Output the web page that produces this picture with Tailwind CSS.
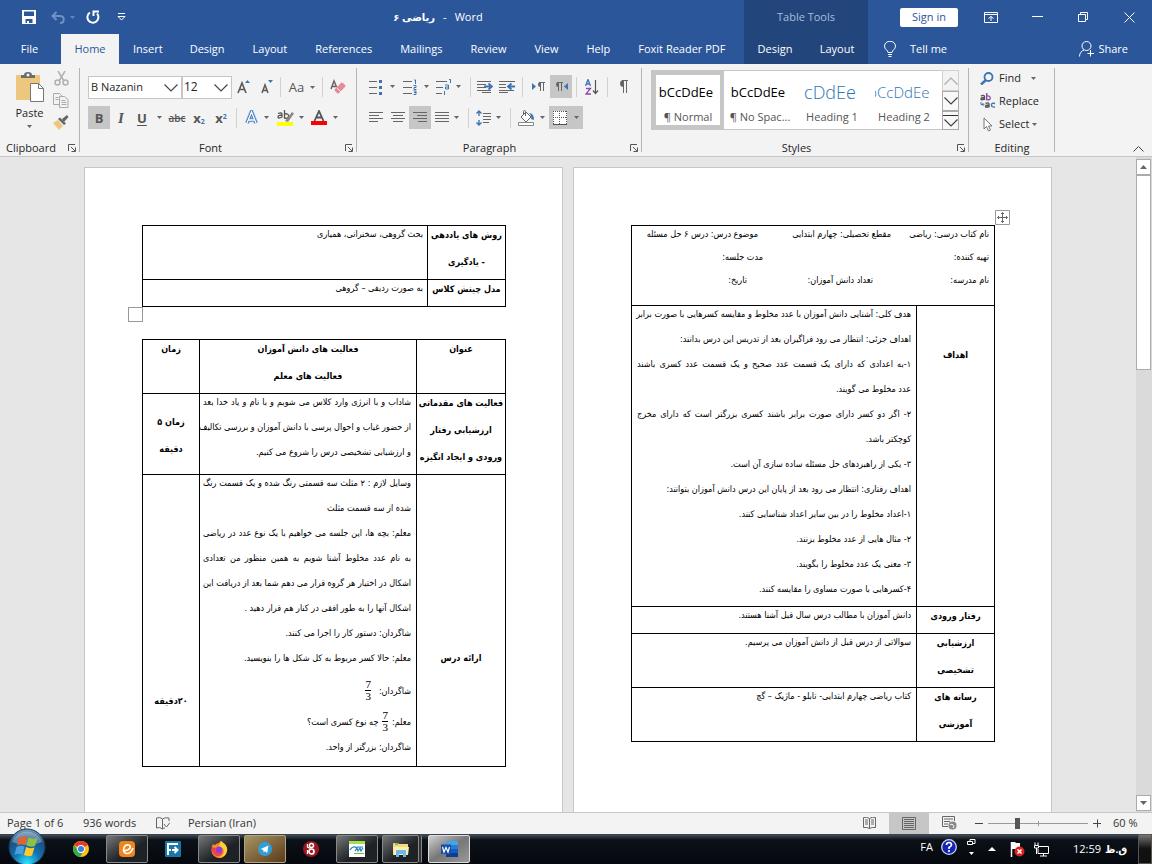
<!DOCTYPE html>
<html lang="en">
<head>
<meta charset="utf-8">
<title>ریاضی ۶ - Word</title>
<script src="https://cdn.jsdelivr.net/npm/@tailwindcss/browser@4"></script>
</head>
<body class="flex h-screen flex-col overflow-hidden bg-[#e6e6e6] font-['Open_Sans','DejaVu_Sans',sans-serif] text-[11px] leading-4 text-[#262626]">

<svg class="hidden">
  <symbol id="caret" viewBox="0 0 5 3"><path d="M0 0h5L2.5 3z" fill="#666"/></symbol>
  <symbol id="chev" viewBox="0 0 14 8"><path d="M.5.5 7 7 13.5.5" fill="none" stroke="#444" stroke-width="1.2"/></symbol>
  <symbol id="launch" viewBox="0 0 8 8"><path d="M.5 7V.5H7M3 3l4 4M7.500 3.500v4h-4" fill="none" stroke="#555"/></symbol>
</svg>

<header class="flex h-16 shrink-0 bg-[#2b579a] text-white">
  <div class="flex min-w-0 flex-1 flex-col">
    <div class="flex h-[34px] items-center">
      <div class="flex w-[132px] items-center pl-[22px]">
        <button aria-label="Save"><svg width="14" height="14" viewBox="0 0 14 14"><path fill="#fff" fill-rule="evenodd" d="M0 0h14v14H0zM2 1.500v4.500h10V1.500zM3.500 9v4H5v-2h2v2h3.500V9z"/></svg></button>
        <button aria-label="Undo" class="ml-[15px]"><svg width="15" height="13" viewBox="0 0 15 13" fill="none" stroke="#6f91c4" stroke-width="2"><path d="M5.500 1 1.500 5l4 4M2 5h7c5 0 5 7 0 7"/></svg></button>
        <svg class="ml-1 h-[3px] w-[5px] opacity-60"><path d="M0 0h5L2.500 3z" fill="#8aa6d2"/></svg>
        <button aria-label="Redo" class="ml-[11px]"><svg width="14" height="14" viewBox="0 0 14 14" fill="none" stroke="#fff" stroke-width="2"><path d="M4 2.500A5.500 5.500 0 1 0 11 3.500"/><path d="M7.500 6V1.500H13"/></svg></button>
        <button aria-label="Customize toolbar" class="ml-[17px]"><svg width="9" height="8" viewBox="0 0 9 8" fill="none" stroke="#fff"><path d="M1 .5h7M1 3.500h7L4.500 7z"/></svg></button>
      </div>
      <h1 class="flex flex-1 justify-center gap-2 whitespace-pre text-[11px]"><bdi lang="fa" class="text-[10px] font-bold">ریاضی ۶</bdi><span>-</span><span>Word</span></h1>
    </div>
    <nav class="flex h-[30px] gap-[2px] whitespace-nowrap">
      <button class="w-[59px]">File</button>
      <button class="w-[58px] bg-[#f3f3f3] text-[#2b579a]">Home</button>
      <button class="px-3">Insert</button>
      <button class="px-[13px]">Design</button>
      <button class="px-[13px]">Layout</button>
      <button class="px-[13px]">References</button>
      <button class="px-[13px]">Mailings</button>
      <button class="px-[13px]">Review</button>
      <button class="px-[13px]">View</button>
      <button class="px-[13px]">Help</button>
      <button class="px-[13px]">Foxit Reader PDF</button>
    </nav>
  </div>
  <div class="flex w-[124px] flex-col bg-[#22457b]">
    <div class="flex h-[34px] items-center justify-center text-[#a9bddc]">Table Tools</div>
    <nav class="flex h-[30px]">
      <button class="flex-1">Design</button>
      <button class="flex-1">Layout</button>
    </nav>
  </div>
  <div class="flex w-[284px] flex-col">
    <div class="flex h-[34px] items-center justify-end">
      <button class="mr-[10px] h-[19px] w-[58px] rounded-xs bg-white text-[#2b579a]">Sign in</button>
      <button aria-label="Ribbon display options" class="flex w-[46px] justify-center"><svg width="14" height="11" viewBox="0 0 14 11" fill="none" stroke="#fff"><path d="M.5.5h13v10H.5zM.5 2.500h13M7 9V4.500M4.500 6.500 7 4.500l2.500 2"/></svg></button>
      <button aria-label="Minimize" class="flex w-[46px] justify-center"><svg width="11" height="2"><path d="M0 .5h11" stroke="#fff"/></svg></button>
      <button aria-label="Restore" class="flex w-[46px] justify-center"><svg width="10" height="10" viewBox="0 0 10 10" fill="none" stroke="#fff"><path d="M.5 2.500h7v7h-7zM2.500 2V.5h7v7H8"/></svg></button>
      <button aria-label="Close" class="flex w-[46px] justify-center"><svg width="11" height="11" viewBox="0 0 11 11"><path d="m.5.5 10 10M10.500.5l-10 10" stroke="#fff"/></svg></button>
    </div>
    <div class="flex h-[30px] items-center pr-6 pl-4">
      <button class="flex items-center gap-[14px]"><svg width="12" height="16" viewBox="0 0 12 16" fill="none" stroke="#fff"><path d="M4 11.500c0-2.500-3.500-3-3.500-6.300a5.500 5 0 0 1 11 0C11.500 8.500 8 9 8 11.500zM4 13.500h4M4.500 15.500h3"/></svg>Tell me</button>
      <button class="ml-auto flex items-center gap-1"><svg width="15" height="16" viewBox="0 0 15 16" fill="none" stroke="#fff"><circle cx="7.500" cy="5" r="4.500"/><path d="M.5 15.500c0-3.500 2-5.500 4.500-6.500M11.500 9v6.500M8.500 12.500H15"/></svg>Share</button>
    </div>
  </div>
</header>

<section aria-label="Ribbon" class="flex h-[93px] shrink-0 border-b border-[#c6c6c6] bg-[#f3f3f3] pt-1">
  <!-- Clipboard -->
  <div class="flex w-20 flex-col">
    <div class="flex h-[70px] pt-[3px] pl-4">
      <button class="flex w-[27px] flex-col items-center">
        <svg class="shrink-0" width="29" height="31" viewBox="0 0 29 31"><path d="M1 4h24v25H1z" fill="#edc77d"/><path d="M6 7V4h3q0-3 4-3t4 3h3v3z" fill="#6d6d6d"/><circle cx="13" cy="4" r="1.500" fill="#f3f3f3"/><path d="M15.500 12.500h8l5 5v13h-13z" fill="#fff" stroke="#777"/><path d="M23.500 12.500v5h5" fill="none" stroke="#777"/></svg>
        <span class="mt-[3px]">Paste</span>
        <svg class="mt-1 h-[3px] w-[5px] shrink-0"><use href="#caret"/></svg>
      </button>
      <div class="ml-[10px] flex flex-col items-center gap-[7px]">
        <button aria-label="Cut"><svg width="15" height="15" viewBox="0 0 15 15" fill="none" stroke="#b0b0b0" stroke-width="1.500"><path d="m4 0 6 10M11 0 5 10"/><circle cx="3.500" cy="11.500" r="2.500"/><circle cx="11.500" cy="11.500" r="2.500"/></svg></button>
        <button aria-label="Copy"><svg width="16" height="15" viewBox="0 0 16 15" fill="#f3f3f3" stroke="#aaa"><path d="M.5.5h6l3 3v8h-9z"/><path d="M6.500 3.500h5l3.500 3v8H6.500zM8.500 7.500h4M8.500 9.500h5M8.500 11.500h5M2.500 4.500h3M2.500 6.500h3"/></svg></button>
        <button aria-label="Format Painter"><svg width="16" height="15" viewBox="0 0 16 15"><path d="m0 8 5-3 5 6-4 4z" fill="#edc77d"/><path d="m5 4 2-1.500 6 6L11 10z" fill="#666"/><path d="m9 4 5-4 1.500 2L11 7z" fill="#666"/></svg></button>
      </div>
    </div>
    <div class="flex justify-center pt-[2px] pr-[2px] pl-1.5"><span class="flex-1">Clipboard</span><button aria-label="Clipboard options" class="px-0.5"><svg class="size-2"><use href="#launch"/></svg></button></div>
  </div>
  <div class="mb-1 -ml-px w-px bg-[#b4b4b4]"></div>

  <!-- Font -->
  <div class="flex w-[277px] flex-col">
    <div class="h-[70px] pt-2 pl-2">
      <div class="flex h-[22px] items-center">
        <label class="relative flex h-[23px] w-[94px] shrink-0"><span class="sr-only">Font name</span><input value="B Nazanin" class="w-full border border-[#c6c6c6] bg-white pr-5 pl-[2px] text-[11px] leading-5 outline-none"><svg class="absolute top-2 right-[4px] h-2 w-[14px]"><use href="#chev"/></svg></label>
        <label class="relative flex h-[23px] w-[50px] shrink-0"><span class="sr-only">Font size</span><select class="w-full appearance-none border border-[#c6c6c6] bg-white pl-px text-[12px] leading-5 outline-none"><option>12</option></select><svg class="absolute top-2 right-[4px] h-2 w-[14px]"><use href="#chev"/></svg></label>
        <button aria-label="Grow font" class="flex w-6 justify-center"><svg width="14" height="16" viewBox="0 0 14 16"><path d="m1 14 4-10 4 10M2.500 10.500h5" fill="none" stroke="#5a5a5a" stroke-width="1.600"/><path d="M8 4h5l-2.500-3z" fill="#3e74b4"/></svg></button>
        <button aria-label="Shrink font" class="flex w-[22px] justify-center"><svg width="13" height="16" viewBox="0 0 13 16"><path d="m1 14 3-8 3 8M2 11.500h4" fill="none" stroke="#5a5a5a" stroke-width="1.500"/><path d="M7 1h5L9.500 4z" fill="#3e74b4"/></svg></button>
        <span class="mx-[2px] h-5 w-px bg-[#d2d2d2]"></span>
        <button aria-label="Change case" class="flex w-[38px] items-center justify-center gap-1.5 text-[13px] text-[#555]">Aa<svg class="h-[3px] w-[5px]"><use href="#caret"/></svg></button>
        <span class="mx-px h-5 w-px bg-[#d2d2d2]"></span>
        <button aria-label="Clear formatting" class="flex w-7 justify-center"><svg width="16" height="16" viewBox="0 0 16 16"><path d="m1 10 3-8 3 7M2 7.500h4" fill="none" stroke="#666" stroke-width="1.500"/><path d="m5 10 6-6q1-1 2 0l2 2q1 1 0 2l-6 6q-1 1-2 0l-2-2q-1-1 0-2" fill="#e8899a"/><path d="m6.500 8.500 5 5" stroke="#f3f3f3"/></svg></button>
      </div>
      <div class="mt-2 flex h-[23px] items-center text-[13px] text-[#555]">
        <button aria-label="Bold" class="h-full w-[22px] bg-[#c6c6c6] font-bold">B</button>
        <button aria-label="Italic" class="w-[22px] font-['Liberation_Serif',serif] text-[15px] font-bold italic">I</button>
        <button aria-label="Underline" class="flex w-[34px] items-center gap-2.5 pl-[5px]"><span class="font-bold underline underline-offset-2">U</span><svg class="h-[3px] w-[5px]"><use href="#caret"/></svg></button>
        <button aria-label="Strikethrough" class="flex w-[22px] justify-center text-[10px] font-semibold line-through">abc</button>
        <button aria-label="Subscript" class="w-[22px] font-bold">x<sub class="text-[7px] text-[#3e74b4]">2</sub></button>
        <button aria-label="Superscript" class="w-[22px] font-bold">x<sup class="text-[7px] text-[#3e74b4]">2</sup></button>
        <span class="mx-1 h-5 w-px bg-[#d2d2d2]"></span>
        <button aria-label="Text effects" class="flex w-8 items-center gap-[5px] pl-[3px]"><svg width="15" height="16" viewBox="0 0 15 16" fill="none"><path d="m3 13 4.500-11L12 13M4.500 10h6" stroke="#a8c8ec" stroke-width="4.500"/><path d="m3 13 4.500-11L12 13M4.500 10h6" stroke="#3e74b4" stroke-width="3"/><path d="m3 13 4.500-11L12 13M4.500 10h6" stroke="#fff" stroke-width="1.300"/></svg><svg class="h-[3px] w-[5px]"><use href="#caret"/></svg></button>
        <button aria-label="Highlight" class="flex w-[34px] items-center gap-[6px] pl-1"><span class="flex w-4 flex-col"><svg width="17" height="12" viewBox="0 0 17 12"><path d="M1 3.500q4-1.500 4 1v3M5 5Q1 5 1 7t4 0M7.500 0v8q4 1 4-2t-4-2" fill="none" stroke="#555" stroke-width="1.300"/><path d="m8 11 7-9 2 1.500L11 12z" fill="#888"/></svg><span class="h-1 bg-[#ff0]"></span></span><svg class="h-[3px] w-[5px]"><use href="#caret"/></svg></button>
        <button aria-label="Font color" class="flex w-9 items-center gap-[6px] pl-1"><span class="flex w-4 flex-col items-center"><svg width="12" height="11" viewBox="0 0 12 11"><path d="m1.500 11 4.500-10 4.500 10M3 7.500h6" fill="none" stroke="#555" stroke-width="1.800"/></svg><span class="h-1 w-4 bg-[red]"></span></span><svg class="h-[3px] w-[5px]"><use href="#caret"/></svg></button>
      </div>
    </div>
    <div class="flex pt-[2px] pr-1"><span class="flex-1 pr-1 text-center">Font</span><button aria-label="Font options"><svg class="size-2"><use href="#launch"/></svg></button></div>
  </div>
  <div class="mb-1 -ml-px w-px bg-[#b4b4b4]"></div>

  <!-- Paragraph -->
  <div class="flex w-[285px] flex-col">
    <div class="h-[70px] pt-[7px] pl-2">
      <div class="flex h-[23px] items-center">
        <button aria-label="Bullets" class="flex w-[34px] items-center gap-[7px] pl-1"><svg width="14" height="16" viewBox="0 0 14 16"><path d="M0 2.500h8M0 8.500h8M0 14.500h8" stroke="#666"/><path d="M10 1h3v3h-3zM10 7h3v3h-3zM10 13h3v3h-3z" fill="#3e74b4"/></svg><svg class="h-[3px] w-[5px]"><use href="#caret"/></svg></button>
        <button aria-label="Numbering" class="flex w-[34px] items-center gap-[7px] pl-1"><svg width="14" height="16" viewBox="0 0 14 16"><path d="M0 2.500h9M0 8.500h9M0 14.500h9" stroke="#666"/><path d="M11 1h1.500v4M10.500 6.500h2.500v2h-2v2h2.500M10.500 12h2.500v3.500h-2.500M11 13.500h2" fill="none" stroke="#3e74b4"/></svg><svg class="h-[3px] w-[5px]"><use href="#caret"/></svg></button>
        <button aria-label="Multilevel list" class="flex w-[34px] items-center gap-1 pl-[3px]"><svg width="16" height="16" viewBox="0 0 16 16"><path d="M0 2.500h11M0 8.500h7M0 14.500h6" stroke="#666"/><path d="M13 .5h1.500V4M9 6h3.500v4H9.500V8h3M8.500 12v4" fill="none" stroke="#3e74b4"/></svg><svg class="h-[3px] w-[5px]"><use href="#caret"/></svg></button>
        <span class="mx-[3px] h-5 w-px bg-[#d2d2d2]"></span>
        <button aria-label="Decrease indent" class="flex w-[22px] justify-center"><svg width="16" height="12" viewBox="0 0 16 12"><path d="M0 .5h14M0 3.500h9M0 6.500h9M0 9.500h14M5 11.500h9" stroke="#666"/><path d="M7 5.500h7M11.500 2.500l3.500 3-3.500 3" fill="none" stroke="#3e74b4" stroke-width="1.800"/></svg></button>
        <button aria-label="Increase indent" class="flex w-[22px] justify-center"><svg width="16" height="12" viewBox="0 0 16 12"><path d="M0 .5h16M0 3.500h7M0 6.500h7M0 9.500h15M0 11.500h9" stroke="#666"/><path d="M9 5.500h7M12.500 2.500l-3.500 3 3.500 3" fill="none" stroke="#3e74b4" stroke-width="1.800"/></svg></button>
        <span class="mx-1 h-5 w-px bg-[#d2d2d2]"></span>
        <button aria-label="Left to right" class="flex w-[23px] items-center justify-center"><svg width="13" height="9" viewBox="0 0 13 9"><path d="M0 1v7l4-3.500z" fill="#3e74b4"/><path d="M8.500 0v9M11.500 0v9M7 .5h6" stroke="#666"/><path d="M8.500 0v5a2.500 2.500 0 0 1 0-5" fill="#666"/></svg></button>
        <button aria-label="Right to left" class="flex h-full w-[22px] items-center justify-center bg-[#c6c6c6]"><svg width="13" height="9" viewBox="0 0 13 9"><path d="M13 1v7L9 4.500z" fill="#3e74b4"/><path d="M3.500 0v9M6.500 0v9M2 .5h6" stroke="#666"/><path d="M3.500 0v5a2.500 2.500 0 0 1 0-5" fill="#666"/></svg></button>
        <span class="mx-1 h-5 w-px bg-[#d2d2d2]"></span>
        <button aria-label="Sort" class="flex w-[22px] justify-center"><svg width="14" height="16" viewBox="0 0 14 16" fill="none"><path d="m.5 7 2.500-6.500L5.500 7M1.500 5h3" stroke="#3e74b4" stroke-width="1.300"/><path d="M1 9.500h4.500L1 15h5" stroke="#8c4bab" stroke-width="1.300"/><path d="M10.500 1v13M8 11.500l2.500 3 2.500-3" stroke="#555" stroke-width="1.200"/></svg></button>
        <span class="mx-1 h-5 w-px bg-[#d2d2d2]"></span>
        <button aria-label="Show marks" class="flex w-[22px] justify-center"><svg width="10" height="13" viewBox="0 0 10 13"><path d="M5.500 0v13M8.500 0v13M4 .5h6" stroke="#666"/><path d="M5.500 0v7a3.500 3.500 0 0 1 0-7" fill="#666"/></svg></button>
      </div>
      <div class="mt-2 flex h-[23px] items-center">
        <button aria-label="Align left" class="flex w-[22px] justify-center"><svg width="14" height="11" viewBox="0 0 14 11"><path d="M0 .5h14M0 3.500h10M0 6.500h14M0 9.500h9" stroke="#666"/></svg></button>
        <button aria-label="Center" class="flex w-[22px] justify-center"><svg width="14" height="11" viewBox="0 0 14 11"><path d="M0 .5h14M2 3.500h10M0 6.500h14M2 9.500h10" stroke="#666"/></svg></button>
        <button aria-label="Align right" class="flex h-full w-[22px] items-center justify-center bg-[#c6c6c6]"><svg width="14" height="11" viewBox="0 0 14 11"><path d="M0 .5h14M4 3.500h10M0 6.500h14M5 9.500h9" stroke="#666"/></svg></button>
        <button aria-label="Justify" class="flex w-[34px] items-center gap-[5px] pl-1"><svg width="14" height="11" viewBox="0 0 14 11"><path d="M0 .5h14M0 3.500h14M0 6.500h14M0 9.500h14" stroke="#666"/></svg><svg class="h-[3px] w-[5px]"><use href="#caret"/></svg></button>
        <span class="mx-[3px] h-5 w-px bg-[#d2d2d2]"></span>
        <button aria-label="Line spacing" class="flex w-[34px] items-center gap-[5px] pl-1"><svg width="15" height="16" viewBox="0 0 15 16"><path d="M7 3.500h8M7 6.500h8M7 9.500h8M7 12.500h6" stroke="#666"/><path d="M3 1v5M3 10v5M.5 3.500 3 1l2.500 2.500M.5 12.500 3 15l2.500-2.500" fill="none" stroke="#3e74b4" stroke-width="1.400"/></svg><svg class="h-[3px] w-[5px]"><use href="#caret"/></svg></button>
        <span class="mx-1 h-5 w-px bg-[#d2d2d2]"></span>
        <button aria-label="Shading" class="flex w-[34px] items-center gap-[5px] pl-[3px]"><svg width="17" height="16" viewBox="0 0 17 16"><path d="m3 7 5-5 5 5-5 5z" fill="#fff" stroke="#666"/><path d="M7.500 6V1.500q0-1-1-1t-1 1V4" fill="none" stroke="#666"/><path d="M11 3q5 0 5 7l-3-1q1-3-2-6" fill="#3e74b4"/><path d="M.5 12.500h15v3H.5z" fill="#fff" stroke="#888"/></svg><svg class="h-[3px] w-[5px]"><use href="#caret"/></svg></button>
        <button aria-label="Borders" class="flex h-full w-[34px] items-center gap-[7px] bg-[#c6c6c6] pl-1"><svg width="14" height="14" viewBox="0 0 14 14"><path d="M0 0h14v14H0z" fill="#fff"/><path d="M0 .5h14M0 6.500h14M.5 0v14M6.500 0v14M13.500 0v14" stroke="#555" stroke-dasharray="1 1"/><path d="M0 13.500h14" stroke="#555"/></svg><svg class="h-[3px] w-[5px]"><use href="#caret"/></svg></button>
      </div>
    </div>
    <div class="flex pt-[2px] pr-1"><span class="flex-1 pr-2 text-center">Paragraph</span><button aria-label="Paragraph options"><svg class="size-2"><use href="#launch"/></svg></button></div>
  </div>
  <div class="mb-1 -ml-px w-px bg-[#b4b4b4]"></div>

  <!-- Styles -->
  <div class="flex w-[327px] flex-col">
    <div class="h-[70px] pt-0.5 pl-[9px]">
      <div class="flex h-[60px] w-[308px] border border-[#c6c6c6] bg-white text-[#555]">
        <button class="flex w-[72px] flex-col items-center overflow-hidden border-4 border-[#c6c6c6] pt-2 whitespace-nowrap"><span class="h-[26px] pr-1 text-[13px] leading-[18px] text-black">bCcDdEe</span>¶ Normal</button>
        <button class="flex w-[72px] flex-col items-center overflow-hidden pt-3 whitespace-nowrap"><span class="h-[26px] pr-1 text-[13px] leading-[18px] text-black">bCcDdEe</span>¶ No Spac...</button>
        <button class="flex w-[72px] flex-col items-center overflow-hidden pt-3 whitespace-nowrap"><span class="h-[26px] pr-1 text-[18px] leading-[18px] font-light text-[#2e74b5]">cDdEe</span>Heading 1</button>
        <button class="flex w-[72px] flex-col items-center overflow-hidden pt-3 whitespace-nowrap"><span class="mr-1 flex h-[26px] w-[55px] justify-end overflow-hidden text-[15px] leading-[18px] font-light text-[#2e74b5]">bCcDdEe</span>Heading 2</button>
        <div class="-my-px -mr-px ml-auto flex w-[17px] flex-col">
          <button aria-label="Scroll styles up" class="flex h-[21px] items-center justify-center border border-[#d0d0d0] bg-[#f3f3f3]"><svg class="h-2 w-[14px] rotate-180 opacity-40"><use href="#chev"/></svg></button>
          <button aria-label="Scroll styles down" class="flex h-5 items-center justify-center border border-[#ababab] bg-[#f8f8f8]"><svg class="h-2 w-[14px]"><use href="#chev"/></svg></button>
          <button aria-label="More styles" class="flex flex-1 flex-col items-center justify-center gap-[3px] border border-[#ababab] bg-[#f8f8f8]"><span class="h-px w-full bg-[#333]"></span><svg class="h-2 w-[14px]"><use href="#chev"/></svg></button>
        </div>
      </div>
    </div>
    <div class="flex pt-[2px] pr-1"><span class="flex-1 pr-1.5 text-center">Styles</span><button aria-label="Style options"><svg class="size-2"><use href="#launch"/></svg></button></div>
  </div>
  <div class="mb-1 -ml-px w-px bg-[#b4b4b4]"></div>

  <!-- Editing -->
  <div class="flex w-[86px] flex-col">
    <div class="flex h-[70px] flex-col gap-[7px] pt-[2px] pl-[11px]">
      <button class="flex items-center"><svg class="mr-[5px]" width="14" height="13" viewBox="0 0 14 13"><circle cx="8.500" cy="5" r="4" fill="none" stroke="#3e74b4" stroke-width="1.800"/><path d="m6 8-5 4.500" stroke="#3e74b4" stroke-width="2.500"/></svg>Find<svg class="ml-[10px] h-[3px] w-[5px]"><use href="#caret"/></svg></button>
      <button class="flex items-center gap-[3px]"><svg width="16" height="16" viewBox="0 0 16 16" fill="none" stroke-width="1.400"><path d="M1 3q3-1.500 3.500.5V7M4.500 4.500q-3.500 0-3.500 1.500t3.500 0" stroke="#555"/><path d="M6.700 0v6.500q3.500 1 3.500-1.500t-3.500-2" stroke="#8c4bab"/><path d="M5.500 10.500q3-1.500 3.500.5v3.500M9 12q-3.500 0-3.500 1.500t3.500 0" stroke="#555"/><path d="M15 10.500q-3.500-1-3.500 1.500t3.500 2" stroke="#3e74b4"/><path d="M1 9v2.500h2.500M2.500 10l1.500 1.500L2.500 13" stroke="#3e74b4" stroke-width="1"/></svg>Replace</button>
      <button class="flex items-center pl-[3px]"><svg class="mr-1.5" width="10" height="15" viewBox="0 0 10 15"><path d="M1 1v11l2.500-2.500L5.500 14l2-1-2-4H9z" fill="#fff" stroke="#777"/></svg>Select<svg class="ml-[3px] h-[3px] w-[5px]"><use href="#caret"/></svg></button>
    </div>
    <div class="pt-[2px] text-center">Editing</div>
  </div>
  <div class="mb-1 -ml-px w-px bg-[#b4b4b4]"></div>
  <button aria-label="Collapse ribbon" class="mt-auto mr-2 mb-1 ml-auto"><svg width="11" height="6" viewBox="0 0 11 6"><path d="m.5 5.500 5-5 5 5" fill="none" stroke="#444"/></svg></button>
</section>

<main class="flex min-h-0 flex-1">
  <div dir="rtl" lang="fa" class="flex min-w-0 flex-1 justify-center gap-[10px] overflow-hidden pt-[10px] font-['DejaVu_Sans_Condensed','DejaVu_Sans',sans-serif] text-[9px] text-black">
    <article class="relative h-[900px] w-[479px] shrink-0 border border-[#c6c6c6] bg-white pt-[57px] pr-14 pl-[57px]">
      <svg class="absolute top-[42px] right-[41px]" width="15" height="15" viewBox="0 0 15 15" fill="none" stroke="#666"><path d="M.5.5h14v14H.5z" fill="#fff" stroke="#999"/><path d="M7.500 2.500v10M2.500 7.500h10M6 4l1.500-1.500L9 4M6 11l1.500 1.500L9 11M4 6 2.500 7.500 4 9M11 6l1.500 1.500L11 9"/></svg>
      <table class="w-full table-fixed border-collapse [&_p:last-child]:h-4 [&_td]:border [&_td]:border-black [&_td]:px-[5px] [&_td]:align-top [&_td]:leading-4 [&_th]:border [&_th]:border-black [&_th]:align-top [&_th]:leading-[18px]">
        <colgroup><col class="w-[78px]"><col></colgroup>
        <tr class="h-20 whitespace-nowrap"><td colspan="2">
          <div class="flex h-[23px]"><span class="w-[98px]">نام کتاب درسی: ریاضی</span><span class="w-[133px]">مقطع تحصیلی: چهارم ابتدایی</span><span>موضوع درس: درس ۶ حل مسئله</span></div>
          <div class="flex h-[23px]"><span class="w-[226px]">تهیه کننده:</span><span>مدت جلسه:</span></div>
          <div class="flex h-[23px]"><span class="w-[116px]">نام مدرسه:</span><span class="w-[126px]">تعداد دانش آموزان:</span><span>تاریخ:</span></div>
        </td></tr>
        <tr class="h-[301px]"><th class="pt-10">اهداف</th><td class="whitespace-nowrap [&_p]:h-[25px]">
          <p class="[text-align-last:justify]">هدف کلی: آشنایی دانش آموزان با عدد مخلوط و مقایسه کسرهایی با صورت برابر</p>
          <p>اهداف جزئی: انتظار می رود فراگیران بعد از تدریس این درس بدانند:</p>
          <p class="[text-align-last:justify]">۱-به اعدادی که دارای یک قسمت عدد صحیح و یک قسمت عدد کسری باشند</p>
          <p>عدد مخلوط می گویند.</p>
          <p class="[text-align-last:justify]">۲- اگر دو کسر دارای صورت برابر باشند کسری بزرگتر است که دارای مخرج</p>
          <p>کوچکتر باشد.</p>
          <p>۳- یکی از راهبردهای حل مسئله ساده سازی آن است.</p>
          <p>اهداف رفتاری: انتظار می رود بعد از پایان این درس دانش آموزان بتوانند:</p>
          <p>۱-اعداد مخلوط را در بین سایر اعداد شناسایی کنند.</p>
          <p>۲- مثال هایی از عدد مخلوط بزنند.</p>
          <p>۳- معنی یک عدد مخلوط را بگویند.</p>
          <p>۴-کسرهایی با صورت مساوی را مقایسه کنند.</p>
        </td></tr>
        <tr class="h-[27px]"><th>رفتار ورودی</th><td>دانش آموزان با مطالب درس سال قبل آشنا هستند.</td></tr>
        <tr class="h-[54px]"><th class="[&_p]:h-[27px]"><p>ارزشیابی</p><p>تشخیصی</p></th><td>سوالاتی از درس قبل از دانش آموزان می پرسیم.</td></tr>
        <tr class="h-[54px]"><th class="[&_p]:h-[27px]"><p>رسانه های</p><p>آموزشی</p></th><td>کتاب ریاضی چهارم ابتدایی- تابلو - ماژیک – گچ</td></tr>
      </table>
    </article>

    <article class="relative h-[900px] w-[479px] shrink-0 border border-[#c6c6c6] bg-white pt-[57px] pr-14 pl-[57px]">
      <table class="w-full table-fixed border-collapse [&_p:last-child]:h-4 [&_td]:border [&_td]:border-black [&_td]:px-1 [&_td]:align-top [&_td]:leading-4 [&_th]:border [&_th]:border-black [&_th]:align-top [&_th]:leading-[18px]">
        <colgroup><col class="w-[78px]"><col></colgroup>
        <tr class="h-[54px]"><th class="whitespace-nowrap [&_p]:h-[27px]"><p>روش های یاددهی</p><p>- یادگیری</p></th><td>بحث گروهی، سخنرانی، همیاری</td></tr>
        <tr class="h-[27px]"><th class="whitespace-nowrap">مدل چینش کلاس</th><td>به صورت ردیفی – گروهی</td></tr>
      </table>
      <span class="absolute top-[139px] left-[43px] size-[15px] border border-[#999] bg-white"></span>
      <table class="mt-8 w-full table-fixed border-collapse [&_p]:whitespace-nowrap [&_p:last-child]:h-4 [&_td]:border [&_td]:border-black [&_td]:ps-[5px] [&_td]:pe-[3px] [&_td]:align-top [&_td]:leading-4 [&_td_p]:h-[25px] [&_th]:border [&_th]:border-black [&_th]:leading-[18px] [&_th_p]:h-[27px]">
        <colgroup><col class="w-[89px]"><col><col class="w-[57px]"></colgroup>
        <tr class="h-[54px]"><th class="align-top">عنوان</th><th class="align-top"><p>فعالیت های دانش آموزان</p><p>فعالیت های معلم</p></th><th class="align-top">زمان</th></tr>
        <tr class="h-[81px]"><th class="align-top"><p>فعالیت های مقدماتی</p><p>ارزشیابی رفتار</p><p>ورودی و ایجاد انگیزه</p></th>
          <td><p class="[text-align-last:justify]">شاداب و با انرژی وارد کلاس می شویم و با نام و یاد خدا بعد</p><p class="-me-1 [text-align-last:justify]">از حضور غیاب و احوال پرسی با دانش آموزان و بررسی تکالیف</p><p>و ارزشیابی تشخیصی درس را شروع می کنیم.</p></td>
          <th><p>زمان ۵</p><p>دقیقه</p></th></tr>
        <tr class="h-[292px]"><th class="pt-[75px]">ارائه درس</th>
          <td>
            <p class="[text-align-last:justify]">وسایل لازم : ۲ مثلث سه قسمتی رنگ شده و یک قسمت رنگ</p>
            <p>شده از سه قسمت مثلث</p>
            <p class="[text-align-last:justify]">معلم: بچه ها، این جلسه می خواهیم با یک نوع عدد در ریاضی</p>
            <p class="[text-align-last:justify]">به نام عدد مخلوط آشنا شویم به همین منظور من تعدادی</p>
            <p class="[text-align-last:justify]">اشکال در اختیار هر گروه قرار می دهم شما بعد از دریافت این</p>
            <p>اشکال آنها را به طور افقی در کنار هم قرار دهید .</p>
            <p>شاگردان: دستور کار را اجرا می کنند.</p>
            <p>معلم: حالا کسر مربوط به کل شکل ها را بنویسید.</p>
            <div class="flex h-[31px] items-center gap-2">شاگردان: <span class="flex flex-col text-center font-['Liberation_Serif',serif] text-[11px] leading-[11px]"><span class="border-b border-black">7</span><span>3</span></span></div>
            <div class="flex h-[31px] items-center gap-1">معلم: <span class="flex flex-col text-center font-['Liberation_Serif',serif] text-[11px] leading-[11px]"><span class="border-b border-black">7</span><span>3</span></span> چه نوع کسری است؟</div>
            <p class="pt-0.5">شاگردان: بزرگتر از واحد.</p>
          </td>
          <th class="pt-40">۲۰دقیقه</th></tr>
      </table>
    </article>
  </div>
  <div class="flex w-4 shrink-0 flex-col bg-[#dadada] pt-0.5 pr-px pb-px">
    <button aria-label="Scroll up" class="flex h-4 items-center justify-center border border-[#ababab] bg-white"><svg class="h-1 w-[7px]" viewBox="0 0 7 4"><path d="M0 4h7L3.500 0z" fill="#666"/></svg></button>
    <div class="h-[195px] border border-[#ababab] bg-white"></div>
    <button aria-label="Scroll down" class="mt-auto flex h-4 items-center justify-center border border-[#ababab] bg-white"><svg class="h-1 w-[7px]" viewBox="0 0 7 4"><path d="M0 0h7L3.500 4z" fill="#666"/></svg></button>
  </div>
</main>

<footer class="shrink-0">
  <div class="flex h-[22px] items-center border-t border-[#c6c6c6] bg-[#f3f3f3] pb-px text-[#333]">
    <span class="w-[76px] pl-[7px] whitespace-nowrap">Page 1 of 6</span>
    <span class="w-[80px] pl-[7px] whitespace-nowrap">936 words</span>
    <svg width="14" height="13" viewBox="0 0 14 13" fill="none" stroke="#666"><path d="M6.500 2Q4-.5.500 1v10q3.500-1.500 6 1 1-1 2.500-1M6.500 2v10M6.500 2Q9 0 13 1v3M8 7l2.500 3L14 5.500"/></svg>
    <span class="ml-[18px]">Persian (Iran)</span>
    <div class="ml-auto flex h-full items-center">
      <button aria-label="Read mode" class="flex w-10 justify-center"><svg width="13" height="12" viewBox="0 0 13 12" fill="none" stroke="#666"><path d="M6.500 1.500Q4-.5.500.5v10q3.500-.5 6 1 2.500-1.500 6-1V.5q-3.500-1-6 1v10M2 3h3M2 5h3M2 7h3M8 3h3M8 5h3M8 7h3"/></svg></button>
      <button aria-label="Print layout" class="flex h-[21px] w-10 items-center justify-center bg-[#c6c6c6]"><svg width="14" height="13" viewBox="0 0 14 13" fill="none" stroke="#666"><path d="M.5.5h13v12H.5zM2 2.500h10M2 4.500h10M2 6.500h10M2 8.500h10M2 10.500h10"/></svg></button>
      <button aria-label="Web layout" class="flex w-10 justify-center"><svg width="15" height="14" viewBox="0 0 15 14" fill="none" stroke="#666"><path d="M6 10.500H.5V.5h12V5M2 3h9M2 5.500h6M2 8h4"/><circle cx="10.500" cy="9.500" r="4" fill="#888" stroke="none"/><path d="m8 9 2-1 2 2-1 2" stroke="#fff"/></svg></button>
      <button aria-label="Zoom out" class="ml-[6px]"><svg width="8" height="9"><path d="M0 4.500h8" stroke="#444"/></svg></button>
      <label class="ml-[5px] flex"><span class="sr-only">Zoom</span><input type="range" min="10" max="300" value="92" class="h-3 w-[100px] appearance-none bg-[linear-gradient(#9a9a9a,#9a9a9a),linear-gradient(#9a9a9a,#9a9a9a)] bg-[length:100%_1px,1px_5px] bg-center bg-no-repeat [&::-webkit-slider-thumb]:h-[11px] [&::-webkit-slider-thumb]:w-[5px] [&::-webkit-slider-thumb]:appearance-none [&::-webkit-slider-thumb]:bg-[#555]"></label>
      <button aria-label="Zoom in" class="ml-[5px]"><svg width="8" height="9"><path d="M0 4.500h8M4.500 .5v8" stroke="#444"/></svg></button>
      <span class="w-[51px] pl-3 whitespace-nowrap">60 %</span>
    </div>
  </div>
  <div class="relative flex h-[30px] items-center bg-[#070b12] bg-linear-to-b from-[#3a4550] from-5% via-[#0c1118] via-20% to-[#05080e] text-white">
    <button aria-label="Start" class="absolute bottom-0 left-2"><svg width="38" height="36" viewBox="0 0 38 36"><defs><radialGradient id="orb" cx=".5" cy=".95" r=".95"><stop offset="0" stop-color="#2fe0ff"/><stop offset=".4" stop-color="#1273b0"/><stop offset=".75" stop-color="#1d4f80"/><stop offset="1" stop-color="#7fa6c4"/></radialGradient></defs><circle cx="19" cy="19" r="18" fill="url(#orb)" stroke="#16364f"/><path d="M4 14A16 16 0 0 1 34 14Q19 20 4 14" fill="#fff" opacity=".3"/><path d="M11 10q4-2.500 8-1l-2 8q-4-1.500-8 .5z" fill="#e8622c"/><path d="M20.500 9.500q4 2 9 .5l-2.500 8q-4.500 1.500-8.500-.5z" fill="#8fc240"/><path d="M8.500 19q4-2 8-.5l-2 8q-4-1.500-8 .5z" fill="#4a9fe0"/><path d="M18 19q4 2 8.500.5l-2.500 8q-4 1.500-8-.5z" fill="#fcc92e"/></svg></button>
    <nav class="flex h-full items-center pl-[60px]" aria-label="Taskbar">
      <button aria-label="Chrome" class="flex w-[46px] justify-center pr-1"><svg width="16" height="16" viewBox="0 0 16 16"><circle cx="8" cy="8" r="8" fill="#fbc116"/><path d="M8 8 1.100 4A8 8 0 0 1 14.900 4z" fill="#e33b2e"/><path d="M1.100 4A8 8 0 0 0 7 15.900L10.500 10 5 9.500z" fill="#2da94f"/><circle cx="8" cy="8" r="3.900" fill="#fff"/><circle cx="8" cy="8" r="3" fill="#3a7ee8"/></svg></button>
      <button aria-label="Eitaa" class="flex h-7 w-[42px] items-center justify-center rounded-xs border border-[#888] bg-linear-to-br from-[#777] to-[#1e2226] to-60%"><svg width="16" height="16" viewBox="0 0 16 16"><rect width="16" height="16" rx="4" fill="#f28418"/><path d="M4.500 9.500c7 .5 8.500-5 5-5.500C4 3.500 2.500 12.500 8 12.500q4 0 6-5.500" fill="none" stroke="#fff" stroke-width="1.700"/></svg></button>
      <button aria-label="Transfer" class="flex w-[50px] justify-center"><svg width="16" height="16" viewBox="0 0 16 16"><rect width="16" height="16" rx="1" fill="#1976a8"/><path d="M3 14V3h10M3 9h3M7 9h5M9.500 6l3 3-3 3" fill="none" stroke="#fff" stroke-width="2"/></svg></button>
      <button aria-label="Firefox" class="flex h-7 w-[42px] items-center justify-center rounded-xs border border-[#888] bg-linear-to-br from-[#777] to-[#1e2226] to-60%"><svg width="17" height="17" viewBox="0 0 17 17"><path d="M2 3q1 1 2 1 2-2 4-2 0-1 2-2 3 3 4 3 3 4 2 7a7.800 7.800 0 0 1-15.500 0Q0 6 2 3" fill="#ff8a1f"/><path d="M10 0q7 5 6 10-2 7-9 7 6-2 6-7-1-4-5-4 1-4 2-6" fill="#ffcf33"/><circle cx="8" cy="9" r="3.500" fill="#8a3ee0"/><path d="M1 6q2 1 5 1l-2 2 3 3q3 1 5-1-2 5-7 4Q0 12 1 6" fill="#f0404e"/></svg></button>
      <button aria-label="Telegram" class="ml-1 flex h-7 w-[42px] items-center justify-center rounded-xs border border-[#b3a27a] bg-linear-to-br from-[#a69766] to-[#5b3a18]"><svg width="14" height="14" viewBox="0 0 16 16"><circle cx="8" cy="8" r="8" fill="#2f9fdb"/><path d="m3 8 9-4-1.500 8.500L8 10.500 6.500 12 6 9z" fill="#fff"/></svg></button>
      <button aria-label="Reader" class="flex w-[50px] justify-center"><svg width="16" height="16" viewBox="0 0 16 16"><circle cx="8" cy="8" r="8" fill="#9e1620"/><circle cx="8.500" cy="4.500" r="2" fill="none" stroke="#fff" stroke-width="1.500"/><circle cx="8.500" cy="10.500" r="2.500" fill="none" stroke="#fff" stroke-width="1.700"/><path d="M4.500 3v3l3 1.500M4.500 13V9" fill="none" stroke="#fff" stroke-width="1.300"/></svg></button>
      <button aria-label="Monitor" class="flex h-7 w-[42px] items-center justify-center rounded-xs border border-[#888] bg-linear-to-br from-[#777] to-[#1e2226] to-60%"><svg width="16" height="16" viewBox="0 0 16 16"><path d="M0 0h16v16H0z" fill="#fff"/><path d="M0 0h16v3H0z" fill="#a6e04a"/><path d="M1 9q3-5 7-2l-2 3M8 6h6M6 10l2-3 1 3 2-3 1 3 2-3" fill="none" stroke="#2381b8" stroke-width="1.200"/><path d="M5 12.500h10" stroke="#6cc04a"/></svg></button>
      <button aria-label="File Explorer" class="ml-1 flex h-7 w-[37px] items-center justify-center rounded-xs border border-[#888] bg-linear-to-br from-[#777] to-[#1e2226] to-60%"><svg width="16" height="15" viewBox="0 0 16 15"><path d="M0 2q0-1 1-1h4l1 1h9v11H0z" fill="#f3da7c"/><path d="M2 1h3v2H2z" fill="#6fc55a"/><path d="M0 5h16l-1 8H1z" fill="#fbeeb0"/><path d="M3 15V9q0-1 1-1h8q1 0 1 1v6h-3v-3H6v3z" fill="#6db8e8"/></svg></button>
      <span class="h-7 w-[3px] rounded-r-xs border-r border-[#888] bg-[#333]"></span>
      <button aria-label="Word" class="ml-[6px] flex h-7 w-[42px] items-center justify-center rounded-xs border border-[#ddd] bg-linear-to-br from-[#d0d0d0] via-[#777] to-[#999]"><svg width="17" height="16" viewBox="0 0 17 16"><path d="M5 0h12v4H5z" fill="#41a5ee"/><path d="M5 4h12v4H5z" fill="#2b7cd3"/><path d="M5 8h12v4H5z" fill="#185abd"/><path d="M5 12h12v4H5z" fill="#103f91"/><path d="M0 3.500h10v9.500H0z" fill="#1850a8"/><path d="m1.500 6 1.500 5 2-4.500L7 11l1.500-5" fill="none" stroke="#fff" stroke-width="1.200"/></svg></button>
    </nav>
    <div class="ml-auto flex h-full items-center">
      <span class="pb-1">FA</span>
      <svg class="mb-1 ml-2" width="16" height="16" viewBox="0 0 16 16"><circle cx="8" cy="8" r="7.300" fill="#1522b8" stroke="#ccd4ee" stroke-width="1.300"/><path d="M5.500 6q0-2.500 2.500-2.500T10.500 6Q10.500 7 8 8.500V10M8 11v2" fill="none" stroke="#fff" stroke-width="1.700"/></svg>
      <svg class="mb-1 ml-[10px]" width="9" height="18" viewBox="0 0 9 18" fill="none" stroke="#fff"><path d="M3 3V1.500h5v4H6M.5 3.500h5v3h-5z"/><path d="M2 14h5L4.500 17z" fill="#fff" stroke="none"/></svg>
      <svg class="ml-3" width="8" height="4"><path d="M0 4h8L4 0z" fill="#fff"/></svg>
      <svg class="ml-[13px]" width="16" height="16" viewBox="0 0 16 16"><path d="M2.500 1v15" stroke="#fff" stroke-width="1.500"/><path d="M3 1h3l1 1h4v7H7L6 8H3z" fill="#fff"/><circle cx="10.500" cy="10.500" r="5" fill="#d22" /><path d="m8.500 8.500 4 4M12.500 8.500l-4 4" stroke="#fff" stroke-width="1.600"/></svg>
      <svg class="ml-[9px]" width="15" height="15" viewBox="0 0 15 15" fill="none" stroke="#fff"><path d="M5 4.500h9.500v7H4V7M6 14h7M9.500 12v2M1 .5v2.500M4 .5v2.500M.5 3.500h4V6h-4zM2.500 6v6"/></svg>
      <time class="ml-6 flex w-[65px] gap-1 whitespace-nowrap">12:59 <bdi lang="fa" class="text-[10px] font-bold">ق.ظ</bdi></time>
      <button aria-label="Show desktop" class="h-full w-[14px] border border-[#555] bg-linear-to-b from-[#777] to-[#111] to-50%"></button>
    </div>
  </div>
</footer>
</body>
</html>
